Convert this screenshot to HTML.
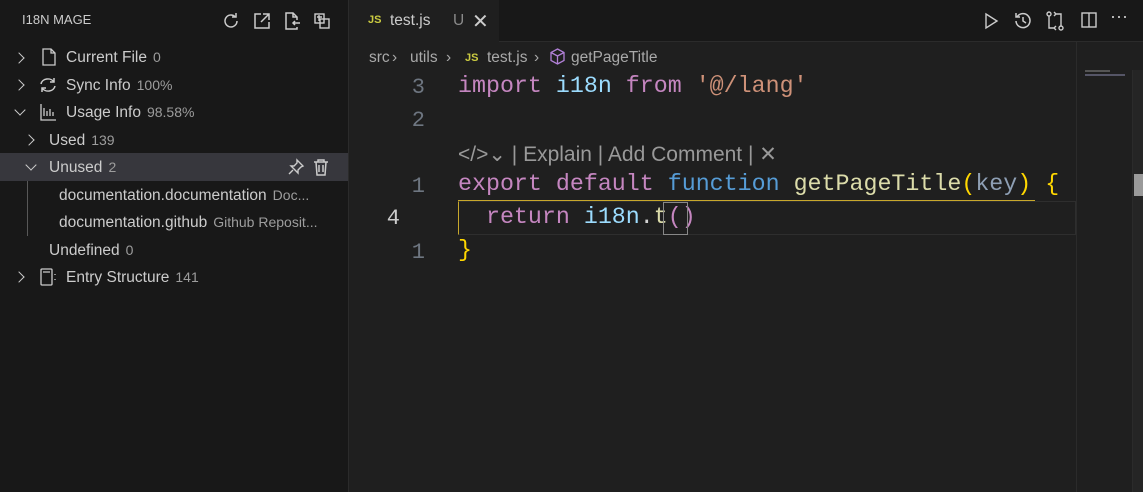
<!DOCTYPE html>
<html><head><meta charset="utf-8"><style>
*{margin:0;padding:0;box-sizing:border-box}
body{width:1143px;height:492px;background:#1f1f1f;font-family:"Liberation Sans",sans-serif;overflow:hidden;position:relative;color:#ccc}
#side{position:absolute;left:0;top:0;width:349px;height:492px;background:#181818;border-right:1px solid #2b2b2b}
.t{position:absolute;font-size:15.5px;color:#cccccc;white-space:nowrap}
.d{color:#9d9d9d;font-size:14px;margin-left:6px}
.chev{position:absolute;width:8px;height:8px;border-right:1.5px solid #ccc;border-bottom:1.5px solid #ccc}
.r{transform:rotate(-45deg)}.dn{transform:rotate(45deg)}
#tabs{position:absolute;left:350px;top:0;right:0;height:42px;background:#181818;border-bottom:1px solid #2b2b2b}
.code{position:absolute;left:458px;font-family:"Liberation Mono",monospace;font-size:23.3px;white-space:pre;color:#d4d4d4}
.ln{position:absolute;font-family:"Liberation Mono",monospace;font-size:22px;color:#6e7681;width:40px;text-align:right;left:385px}
.k{color:#c586c0}.v{color:#9cdcfe}.s{color:#ce9178}.b{color:#569cd6}.f{color:#dcdcaa}.y{color:#ffd700}.p{color:#8e9fb4}
svg{position:absolute}
.bc{position:absolute;top:49px;font-size:15.5px;color:#a9a9a9}
</style></head><body>
<div id="side">
<div class="t" style="left:22px;top:12px;font-size:13px">I18N MAGE</div>
<svg style="left:221px;top:11px" width="20" height="20" viewBox="0 0 20 20" fill="none" stroke="#ccc" stroke-width="1.5"><path d="M16 10a6 6 0 1 1-2-4.5"/><path d="M15 2v4h-4"/></svg>
<svg style="left:252px;top:11px" width="20" height="20" viewBox="0 0 20 20" fill="none" stroke="#ccc" stroke-width="1.5"><path d="M9 3H3v14h14v-6"/><path d="M11 3h6v6M17 3l-8 8"/></svg>
<svg style="left:282px;top:11px" width="20" height="20" viewBox="0 0 20 20" fill="none" stroke="#ccc" stroke-width="1.5"><path d="M15 9V6l-4-4H4v16h11v-2"/><path d="M11 2v4h4M18 12h-7M13 10l-2 2 2 2"/></svg>
<svg style="left:312px;top:11px" width="20" height="20" viewBox="0 0 20 20" fill="none" stroke="#ccc" stroke-width="1.4"><rect x="3" y="3" width="9" height="9"/><rect x="8" y="8" width="9" height="9"/><path d="M5 6h5M7 4v6"/></svg>
<div class="chev r" style="left:15px;top:54px"></div>
<svg style="left:40px;top:48px" width="18" height="18" viewBox="0 0 18 18" fill="none" stroke="#ccc" stroke-width="1.3"><path d="M3 1h8l4 4v12H3z M11 1v4h4"/></svg>
<div class="t" style="left:66px;top:49px">Current File<span class="d">0</span></div>
<div class="chev r" style="left:15px;top:81px"></div>
<svg style="left:38px;top:75px" width="20" height="20" viewBox="0 0 20 20" fill="none" stroke="#ccc" stroke-width="1.5"><path d="M3 9a7 6 0 0 1 13-2M17 11a7 6 0 0 1-13 2"/><path d="M16 3v4h-4M4 17v-4h4"/></svg>
<div class="t" style="left:66px;top:77px">Sync Info<span class="d">100%</span></div>
<div class="chev dn" style="left:16px;top:106px"></div>
<svg style="left:39px;top:103px" width="18" height="18" viewBox="0 0 18 18" fill="none" stroke="#ccc" stroke-width="1.3"><path d="M2 1v16h15M5 13V5M8 13V8M11 13V6M14 13V9"/></svg>
<div class="t" style="left:66px;top:104px">Usage Info<span class="d">98.58%</span></div>
<div class="chev r" style="left:25px;top:136px"></div>
<div class="t" style="left:49px;top:132px">Used<span class="d">139</span></div>
<div style="position:absolute;left:0;top:153px;width:348px;height:28px;background:#37373d"></div>
<div class="chev dn" style="left:27px;top:161px"></div>
<div class="t" style="left:49px;top:159px">Unused<span class="d">2</span></div>
<svg style="left:287px;top:158px" width="18" height="18" viewBox="0 0 18 18" fill="none" stroke="#ccc" stroke-width="1.4"><path d="M10 2l6 6-2 1-3 3v3l-7-7h3l3-3z M6 12l-4 4"/></svg>
<svg style="left:313px;top:158px" width="16" height="18" viewBox="0 0 16 18" fill="none" stroke="#ccc" stroke-width="1.5"><path d="M1 4h14M5 4V2h6v2M3 4l1 13h8l1-13M6 7v7M10 7v7"/></svg>
<div style="position:absolute;left:27px;top:181px;width:1px;height:55px;background:#585858"></div>
<div class="t" style="left:59px;top:187px">documentation.documentation<span class="d">Doc...</span></div>
<div class="t" style="left:59px;top:214px">documentation.github<span class="d">Github Reposit...</span></div>
<div class="t" style="left:49px;top:242px">Undefined<span class="d">0</span></div>
<div class="chev r" style="left:15px;top:273px"></div>
<svg style="left:39px;top:268px" width="20" height="18" viewBox="0 0 20 18" fill="none" stroke="#ccc" stroke-width="1.3"><rect x="2" y="1" width="11" height="16" rx="1"/><path d="M4 4h7M16 6v1M16 11v1"/></svg>
<div class="t" style="left:66px;top:269px">Entry Structure<span class="d">141</span></div>
</div>
<div id="tabs">
<div style="position:absolute;left:0;top:0;width:149px;height:42px;background:#1f1f1f"></div>
<div style="position:absolute;left:18px;top:14px;font-size:11px;font-weight:bold;color:#cbcb41">JS</div>
<div class="t" style="left:40px;top:12px">test.js</div>
<div class="t" style="left:103px;top:12px;color:#8a8a8a">U</div>
<div class="t" style="left:122px;top:9px;font-size:20px">✕</div>
<svg style="left:632px;top:12px" width="18" height="18" viewBox="0 0 18 18" fill="none" stroke="#ccc" stroke-width="1.4"><path d="M4 2l11 7-11 7z"/></svg>
<svg style="left:663px;top:11px" width="20" height="20" viewBox="0 0 20 20" fill="none" stroke="#ccc" stroke-width="1.5"><path d="M4 6a7 7 0 1 1-1 4M3 2v4h4M10 6v4l3 2"/></svg>
<svg style="left:695px;top:11px" width="20" height="20" viewBox="0 0 20 20" fill="none" stroke="#ccc" stroke-width="1.4"><circle cx="4" cy="3" r="2"/><circle cx="16" cy="17" r="2"/><path d="M4 5v12h5M16 15V3h-5M11 15l-2 2 2 2M9 1l2 2-2 2"/></svg>
<svg style="left:730px;top:11px" width="18" height="18" viewBox="0 0 18 18" fill="none" stroke="#ccc" stroke-width="1.4"><rect x="2" y="2" width="14" height="14"/><path d="M9 2v14"/></svg>
<div class="t" style="left:760px;top:6px;font-size:18px">···</div>
</div>
<div class="bc" style="left:369px">src</div>
<div class="bc" style="left:392px">›</div>
<div class="bc" style="left:410px">utils</div>
<div class="bc" style="left:446px">›</div>
<div class="bc" style="left:465px;top:52px;color:#cbcb41;font-size:11px;font-weight:bold">JS</div>
<div class="bc" style="left:487px">test.js</div>
<div class="bc" style="left:534px">›</div>
<svg style="left:549px;top:48px" width="17" height="17" viewBox="0 0 17 17" fill="none" stroke="#b180d7" stroke-width="1.3"><path d="M8.5 1l6.5 3.5v8L8.5 16 2 12.5v-8zM2 4.5l6.5 3.5 6.5-3.5M8.5 8v8"/></svg>
<div class="bc" style="left:571px">getPageTitle</div>
<div class="ln" style="top:75px">3</div>
<div class="code" style="top:73px"><span class="k">import</span> <span class="v">i18n</span> <span class="k">from</span> <span class="s">'@/lang'</span></div>
<div class="ln" style="top:108px">2</div>
<div class="t" style="left:458px;top:142px;font-size:21px;color:#999">&lt;/&gt;⌄ | Explain | Add Comment | ✕</div>
<div class="ln" style="top:174px">1</div>
<div class="code" style="top:171px"><span class="k">export</span> <span class="k">default</span> <span class="b">function</span> <span class="f">getPageTitle</span><span class="y">(</span><span class="p">key</span><span class="y">)</span> <span class="y">{</span></div>
<div style="position:absolute;left:458px;top:200px;width:577px;height:1px;background:#c8a82c"></div>
<div style="position:absolute;left:458px;top:201px;width:618px;height:34px;border:1px solid #2e2e2e;border-left:1px solid #c8a82c"></div>
<div class="ln" style="top:206px;color:#ccc;left:360px">4</div>
<div class="code" style="top:204px">  <span class="k">return</span> <span class="v">i18n</span>.<span class="f">t</span><span class="k">()</span></div>
<div style="position:absolute;left:663px;top:202px;width:25px;height:33px;border:1px solid #888"></div>
<div class="ln" style="top:240px">1</div>
<div class="code" style="top:237px"><span class="y">}</span></div>
<div style="position:absolute;left:1076px;top:42px;width:1px;height:450px;background:#2b2b2b"></div>
<div style="position:absolute;left:1132px;top:70px;width:11px;height:422px;background:#252525;border-left:1px solid #2b2b2b"></div>
<div style="position:absolute;left:1134px;top:174px;width:9px;height:22px;background:#9a9a9a"></div>
<div style="position:absolute;left:1085px;top:70px;width:25px;height:2px;background:#555"></div>
<div style="position:absolute;left:1085px;top:74px;width:40px;height:2px;background:#556"></div>
</body></html>
